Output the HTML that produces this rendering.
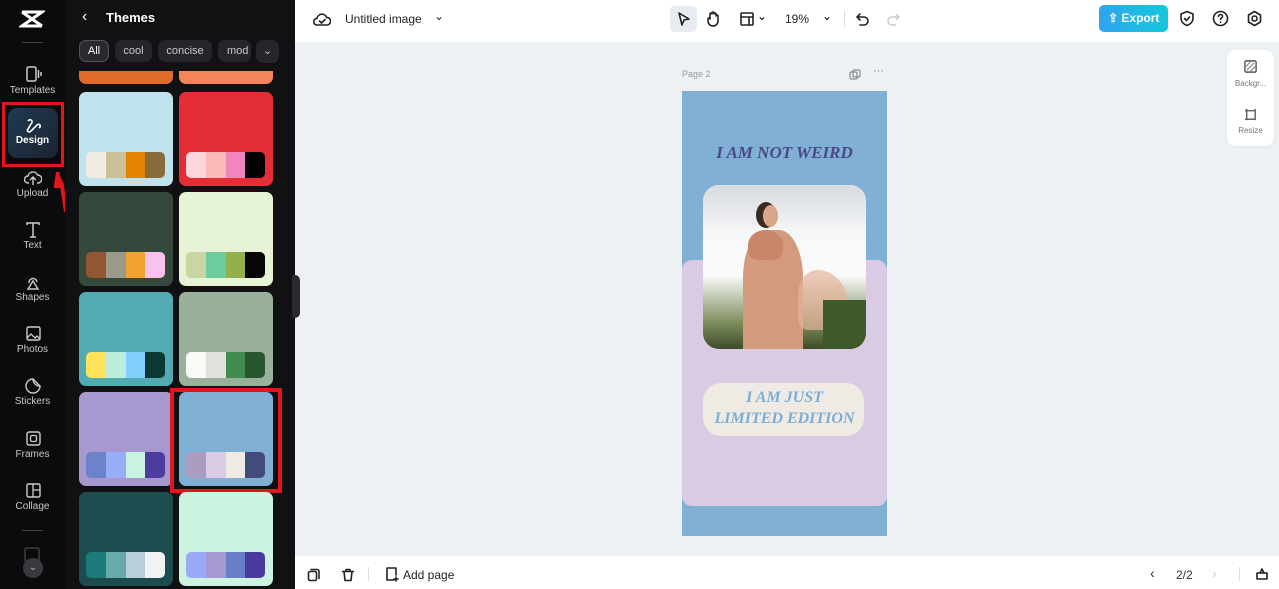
<!DOCTYPE html>
<html><head><meta charset="utf-8"><style>
*{margin:0;padding:0;box-sizing:border-box}
body{width:1279px;height:589px;overflow:hidden;position:relative;font-family:"Liberation Sans",sans-serif;background:#eef1f4}
.a{position:absolute}
.rail{left:0;top:0;width:65px;height:589px;background:#0b0b0d}
.panel{left:65px;top:0;width:230px;height:589px;background:#111113;overflow:hidden}
.ri{position:absolute;left:0;width:65px;text-align:center;color:#c9c9cc;font-size:10px}
.ri svg{display:block;margin:0 auto 2px}
.chip{position:absolute;top:40px;height:22px;border-radius:7px;background:#26262a;color:#c8c8cc;font-size:11px;line-height:22px;text-align:center}
.card{position:absolute;width:94px;height:94px;border-radius:7px}
.pal{position:absolute;left:7px;top:60px;width:79px;height:26px;border-radius:5px;overflow:hidden;display:flex}
.pal i{flex:1}
.top{left:295px;top:0;width:984px;height:42px;background:#fff}
.bot{left:295px;top:556px;width:984px;height:33px;background:#fff}
.ic{stroke:#222;fill:none;stroke-width:1.6;stroke-linecap:round;stroke-linejoin:round}
.sc{font-family:"Liberation Serif",serif;font-style:italic;font-weight:bold}
</style></head><body>
<div class="a rail">
 <svg class="a" style="left:19px;top:9px" width="26" height="20" viewBox="0 0 26 20"><path d="M3 3h20L3 17h20" stroke="#fff" stroke-width="3" fill="none"/><path d="M3 3l20 14" stroke="#fff" stroke-width="3"/></svg>
 <div class="a" style="left:22px;top:42px;width:21px;height:1px;background:#444"></div>
 <div class="ri" style="top:65px"><svg width="18" height="18" viewBox="0 0 18 18"><rect x="3" y="2" width="9" height="14" rx="1.5" stroke="#ccc" stroke-width="1.5" fill="none"/><path d="M14.5 5v8M17 7v4" stroke="#ccc" stroke-width="1.5"/></svg>Templates</div>
 <div class="a" style="left:2px;top:102px;width:62px;height:65px;border:3px solid #e3161e"></div>
 <div class="a" style="left:8px;top:108px;width:50px;height:50px;border-radius:9px;background:linear-gradient(135deg,#1e3a52,#1b2430)"></div>
 <div class="ri" style="top:117px;color:#fff;font-weight:bold;font-size:10px"><svg width="18" height="16" viewBox="0 0 18 16"><path d="M4 4c2-3 6 0 3 3L4 12c-2 2 1 4 3 2l6-6c2-2 5 1 2 3" stroke="#fff" stroke-width="1.6" fill="none"/></svg>Design</div>
 <svg class="a" style="left:54px;top:170px" width="18" height="44" viewBox="0 0 18 44"><path d="M4 2l-2 14h6l4 26" stroke="#e3161e" stroke-width="4" fill="none"/><path d="M0 14l4-12 6 12z" fill="#e3161e"/></svg>
 <div class="ri" style="top:170px"><svg width="18" height="16" viewBox="0 0 18 16"><path d="M5 13H4a3.5 3.5 0 010-7 5 5 0 019.5-1A3.5 3.5 0 0114 13h-1M9 15V8M6 10l3-3 3 3" stroke="#ccc" stroke-width="1.4" fill="none"/></svg>Upload</div>
 <div class="ri" style="top:222px"><svg width="18" height="16" viewBox="0 0 18 16"><path d="M3 3V1h12v2M9 1v14M6 15h6" stroke="#ccc" stroke-width="1.5" fill="none"/></svg>Text</div>
 <div class="ri" style="top:274px"><svg width="18" height="16" viewBox="0 0 18 16"><path d="M5 9a4 4 0 118-1M4 15l5-8 5 8z" stroke="#ccc" stroke-width="1.4" fill="none"/></svg>Shapes</div>
 <div class="ri" style="top:326px"><svg width="18" height="16" viewBox="0 0 18 16"><rect x="3" y="1" width="13" height="13" rx="1.5" stroke="#ccc" stroke-width="1.4" fill="none"/><path d="M3 12l4-4 4 4 2-2 3 3" stroke="#ccc" stroke-width="1.3" fill="none"/></svg>Photos</div>
 <div class="ri" style="top:378px"><svg width="18" height="16" viewBox="0 0 18 16"><path d="M9 1a7 7 0 107 7c-4 0-7-3-7-7zM9 1l7 7" stroke="#ccc" stroke-width="1.4" fill="none"/></svg>Stickers</div>
 <div class="ri" style="top:431px"><svg width="18" height="16" viewBox="0 0 18 16"><rect x="3" y="1" width="13" height="13" rx="2" stroke="#ccc" stroke-width="1.4" fill="none"/><rect x="6.5" y="4.5" width="6" height="6" rx="1.5" stroke="#ccc" stroke-width="1.3" fill="none"/></svg>Frames</div>
 <div class="ri" style="top:483px"><svg width="18" height="16" viewBox="0 0 18 16"><rect x="3" y="1" width="13" height="13" rx="1.5" stroke="#ccc" stroke-width="1.4" fill="none"/><path d="M9 1v13M9 7h7" stroke="#ccc" stroke-width="1.3"/></svg>Collage</div>
 <div class="a" style="left:22px;top:530px;width:21px;height:1px;background:#444"></div>
 <div class="a" style="left:24px;top:547px;width:16px;height:16px;border:2px solid #333;border-radius:3px"></div>
 <div class="a" style="left:23px;top:558px;width:20px;height:20px;border-radius:50%;background:#3a3a3e;color:#bbb;font-size:10px;text-align:center;line-height:20px">⌄</div>
</div>
<div class="a panel">
 <div class="card" style="left:14px;top:-10px;background:#e06a2a"></div>
 <div class="card" style="left:114px;top:-10px;background:#f5845a"></div>
 <div class="a" style="left:0;top:0;width:230px;height:71px;background:#111113"></div>
 <div class="a" style="left:17px;top:8px;color:#fff;font-size:16px">‹</div>
 <div class="a" style="left:41px;top:10px;color:#fff;font-size:13px;font-weight:bold">Themes</div>
 <div class="chip" style="left:14px;width:30px;background:#2a2a2e;border:1px solid #555;color:#fff;line-height:20px">All</div>
 <div class="chip" style="left:50px;width:37px">cool</div>
 <div class="chip" style="left:93px;width:54px">concise</div>
 <div class="chip" style="left:153px;width:33px;text-align:left;padding-left:9px;overflow:hidden">mod</div>
 <div class="chip" style="left:191px;top:40px;width:23px;height:23px">⌄</div>
 <div class="card" style="left:14px;top:92px;background:#c0e2ec"><div class="pal"><i style="background:#f1ece3"></i><i style="background:#cbbf9a"></i><i style="background:#e48204"></i><i style="background:#8b6a3c"></i></div></div>
 <div class="card" style="left:114px;top:92px;background:#e52d35"><div class="pal"><i style="background:#fcd6dc"></i><i style="background:#fdb8b8"></i><i style="background:#f186bf"></i><i style="background:#050203"></i></div></div>
 <div class="card" style="left:14px;top:192px;background:#34483c"><div class="pal"><i style="background:#925632"></i><i style="background:#9a9a8a"></i><i style="background:#f2a32f"></i><i style="background:#f9c2ec"></i></div></div>
 <div class="card" style="left:114px;top:192px;background:#e6f3d4"><div class="pal"><i style="background:#c9d6a2"></i><i style="background:#6ccc9c"></i><i style="background:#91b24a"></i><i style="background:#060606"></i></div></div>
 <div class="card" style="left:14px;top:292px;background:#52abb3"><div class="pal"><i style="background:#fde25a"></i><i style="background:#bdeedb"></i><i style="background:#82cffd"></i><i style="background:#0b3832"></i></div></div>
 <div class="card" style="left:114px;top:292px;background:#99b19a"><div class="pal"><i style="background:#fafaf7"></i><i style="background:#e2e0dc"></i><i style="background:#428d4d"></i><i style="background:#295630"></i></div></div>
 <div class="card" style="left:14px;top:392px;background:#a898d0"><div class="pal"><i style="background:#6c82ca"></i><i style="background:#99adfb"></i><i style="background:#c9f3e1"></i><i style="background:#4e3ba0"></i></div></div>
 <div class="card" style="left:114px;top:392px;background:#80b0d4"><div class="pal"><i style="background:#ab9cc2"></i><i style="background:#d9cbe4"></i><i style="background:#efeae3"></i><i style="background:#434a7c"></i></div></div>
 <div class="a" style="left:105px;top:388px;width:112px;height:105px;border:4px solid #e3161e"></div>
 <div class="card" style="left:14px;top:492px;background:#1c4c4e"><div class="pal"><i style="background:#1a7b7a"></i><i style="background:#67aaaa"></i><i style="background:#b8ceda"></i><i style="background:#eff3f6"></i></div></div>
 <div class="card" style="left:114px;top:492px;background:#ccf3e0"><div class="pal"><i style="background:#98aaf8"></i><i style="background:#a898d0"></i><i style="background:#6a7fc9"></i><i style="background:#4c3b9f"></i></div></div>
</div>
<div class="a" style="left:292px;top:275px;width:8px;height:43px;background:#2a2a2e;border-radius:0 5px 5px 0"></div>
<div class="a top">
 <svg class="a" style="left:18px;top:11px" width="18" height="16" viewBox="0 0 18 16"><path class="ic" d="M5 14H4a3.3 3.3 0 010-6.6 5 5 0 019.6-1A3.5 3.5 0 0114 14zM6.5 10l2 2 3.5-3.5"/></svg>
 <div class="a" style="left:50px;top:12px;font-size:12px;color:#222">Untitled image</div>
 <div class="a" style="left:139px;top:9px;font-size:12px;color:#222">⌄</div>
 <div class="a" style="left:375px;top:6px;width:27px;height:26px;border-radius:5px;background:#e8ecf0"></div>
 <svg class="a" style="left:381px;top:11px" width="16" height="16" viewBox="0 0 16 16"><path class="ic" d="M3 2l10 6-5 1-2 5z"/></svg>
 <svg class="a" style="left:410px;top:10px" width="16" height="17" viewBox="0 0 16 17"><path class="ic" d="M5 9V4a1 1 0 012 0V3a1 1 0 012 0v1a1 1 0 012 0v2a1 1 0 012 0v5a5 5 0 01-10 0V9a1 1 0 012 0"/></svg>
 <svg class="a" style="left:444px;top:11px" width="16" height="16" viewBox="0 0 16 16"><rect class="ic" x="2" y="2" width="12" height="12" rx="1"/><path class="ic" d="M2 6h12M10 6v8"/></svg>
 <div class="a" style="left:462px;top:9px;font-size:12px">⌄</div>
 <div class="a" style="left:490px;top:12px;font-size:12px;color:#222">19%</div>
 <div class="a" style="left:527px;top:9px;font-size:12px">⌄</div>
 <div class="a" style="left:549px;top:11px;width:1px;height:16px;background:#ddd"></div>
 <svg class="a" style="left:560px;top:11px" width="16" height="16" viewBox="0 0 16 16"><path class="ic" d="M5 3L2 6l3 3M2 6h7a4 4 0 010 8H5"/></svg>
 <svg class="a" style="left:590px;top:11px" width="16" height="16" viewBox="0 0 16 16"><path d="M11 3l3 3-3 3M14 6H7a4 4 0 000 8h4" stroke="#ccc" stroke-width="1.5" fill="none"/></svg>
 <div class="a" style="left:804px;top:5px;width:69px;height:27px;border-radius:5px;background:linear-gradient(90deg,#2fa4f0,#16c7dc);color:#fff;font-size:12px;font-weight:bold;line-height:27px;padding-left:9px">⇪ Export</div>
 <svg class="a" style="left:884px;top:10px" width="16" height="17" viewBox="0 0 16 17"><path class="ic" d="M8 1.5l6 2.5v4c0 4-3 6.5-6 7.5C5 14.5 2 12 2 8V4zM5.5 8.5l2 2 3-3.5"/></svg>
 <svg class="a" style="left:917px;top:10px" width="17" height="17" viewBox="0 0 17 17"><circle class="ic" cx="8.5" cy="8.5" r="7"/><path class="ic" d="M6.5 6.5a2 2 0 114 0c0 1.5-2 1.5-2 3M8.5 12v.3"/></svg>
 <svg class="a" style="left:951px;top:10px" width="17" height="17" viewBox="0 0 17 17"><path class="ic" d="M8.5 1.5l6 3.5v7l-6 3.5-6-3.5V5z"/><circle class="ic" cx="8.5" cy="8.5" r="2.5"/></svg>
</div>
<div class="a" style="left:1227px;top:50px;width:47px;height:96px;background:#fff;border-radius:9px;box-shadow:0 1px 4px rgba(0,0,0,.06)"></div>
<svg class="a" style="left:1243px;top:59px" width="15" height="15" viewBox="0 0 16 16"><rect x="2" y="2" width="12" height="12" rx="1.5" stroke="#555" stroke-width="1.5" fill="none"/><path d="M4 12l8-8M2 9l7-7M7 14l7-7" stroke="#888" stroke-width="1.2"/></svg>
<div class="a" style="left:1227px;top:79px;width:47px;text-align:center;font-size:8px;color:#777">Backgr...</div>
<svg class="a" style="left:1243px;top:107px" width="15" height="15" viewBox="0 0 16 16"><path d="M4 2v12M2 4h11M2 13h11M13 2v12" stroke="#555" stroke-width="1.4" fill="none"/></svg>
<div class="a" style="left:1227px;top:126px;width:47px;text-align:center;font-size:8px;color:#777">Resize</div>
<div class="a" style="left:682px;top:69px;font-size:9px;color:#999">Page 2</div>
<svg class="a" style="left:849px;top:69px" width="12" height="12" viewBox="0 0 12 12"><rect x="1" y="3" width="7" height="7" rx="1" stroke="#777" fill="none"/><rect x="4" y="1" width="7" height="7" rx="1" stroke="#777" fill="none"/></svg>
<div class="a" style="left:873px;top:65px;font-size:11px;color:#777">···</div>
<div class="a" style="left:682px;top:91px;width:205px;height:445px;background:#80b0d4;overflow:hidden">
 <div class="a" style="left:0;top:169px;width:205px;height:246px;background:#d9cbe4;border-radius:10px"></div>
 <div class="a sc" style="left:0;top:52px;width:205px;text-align:center;font-size:17px;color:#4a4888">I AM NOT WEIRD</div>
 <div class="a" style="left:21px;top:94px;width:163px;height:164px;border-radius:16px;overflow:hidden;background:linear-gradient(180deg,#f4f6f8 0%,#fafafa 55%,#7a8a58 85%,#3e4a2a 100%)">
  <div class="a" style="left:0;top:0;width:163px;height:50px;background:linear-gradient(180deg,#d8dbe0,rgba(240,242,245,0))"></div>
  <div class="a" style="left:40px;top:45px;width:60px;height:119px;background:#d49a7e;border-radius:40% 40% 0 0"></div>
  <div class="a" style="left:45px;top:45px;width:35px;height:30px;background:#c8876a;border-radius:50% 50% 30% 30%"></div>
  <div class="a" style="left:53px;top:17px;width:20px;height:26px;background:#3a2a22;border-radius:50%"></div>
  <div class="a" style="left:60px;top:20px;width:15px;height:22px;background:#d9a68a;border-radius:50%"></div>
  <div class="a" style="left:95px;top:85px;width:50px;height:60px;background:#e4b49a;opacity:.7;border-radius:40% 60% 20% 20%"></div>
  <div class="a" style="left:120px;top:115px;width:43px;height:49px;background:#3f5a2a"></div>
 </div>
 <div class="a" style="left:21px;top:292px;width:161px;height:53px;border-radius:18px;background:#efeae3"></div>
 <div class="a sc" style="left:0;top:296px;width:205px;text-align:center;font-size:16px;line-height:21px;color:#7aaed6">I AM JUST<br>LIMITED EDITION</div>
</div>
<div class="a bot">
 <svg class="a" style="left:12px;top:12px" width="14" height="14" viewBox="0 0 14 14"><rect class="ic" x="1.5" y="3.5" width="8" height="9" rx="1.5"/><path class="ic" d="M4 1.5h6a2 2 0 012 2v7"/></svg>
 <svg class="a" style="left:46px;top:12px" width="14" height="14" viewBox="0 0 14 14"><path class="ic" d="M1.5 3.5h11M5 3.5V1.5h4v2M3 3.5l1 9h6l1-9"/></svg>
 <div class="a" style="left:73px;top:11px;width:1px;height:14px;background:#ddd"></div>
 <svg class="a" style="left:89px;top:10px" width="16" height="16" viewBox="0 0 16 16"><path class="ic" d="M10 14H3V2h9v7M12 11v4M10 13h4"/></svg>
 <div class="a" style="left:108px;top:12px;font-size:12px;color:#222">Add page</div>
 <div class="a" style="left:855px;top:9px;font-size:14px;color:#333">‹</div>
 <div class="a" style="left:881px;top:12px;font-size:12px;color:#333">2/2</div>
 <div class="a" style="left:917px;top:9px;font-size:14px;color:#ccc">›</div>
 <div class="a" style="left:944px;top:11px;width:1px;height:14px;background:#ddd"></div>
 <svg class="a" style="left:960px;top:11px" width="14" height="14" viewBox="0 0 14 14"><path class="ic" d="M2 6h10v6H2zM5 6l2-4 2 4"/></svg>
</div>
</body></html>
